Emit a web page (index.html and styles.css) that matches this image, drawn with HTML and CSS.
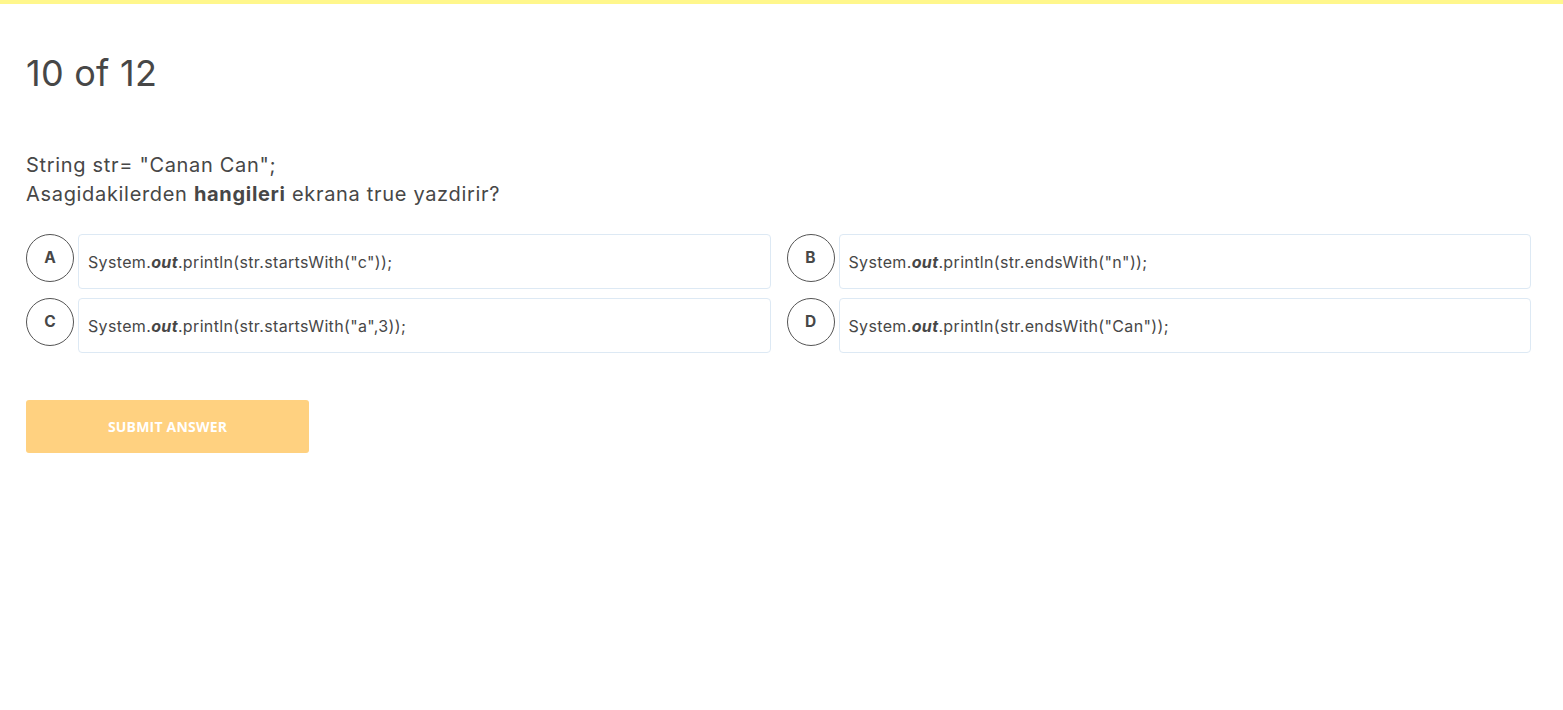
FILE: index.html
```html
<!DOCTYPE html>
<html>
<head>
<meta charset="utf-8">
<link rel="stylesheet" href="styles.css">
</head>
<body>
<div class="topbar"></div>
<main class="quiz">
  <h1 class="counter">10 of 12</h1>
  <div class="question">
    <p>String str= "Canan Can";</p>
    <p>Asagidakilerden <b>hangileri</b> ekrana true yazdirir?</p>
  </div>
  <div class="options">
    <div class="option"><span class="letter">A</span><div class="answer">System.<b><i>out</i></b>.println(str.startsWith("c"));</div></div>
    <div class="option"><span class="letter">B</span><div class="answer">System.<b><i>out</i></b>.println(str.endsWith("n"));</div></div>
    <div class="option"><span class="letter">C</span><div class="answer">System.<b><i>out</i></b>.println(str.startsWith("a",3));</div></div>
    <div class="option"><span class="letter">D</span><div class="answer">System.<b><i>out</i></b>.println(str.endsWith("Can"));</div></div>
  </div>
  <button class="submit">SUBMIT ANSWER</button>
</main>
</body>
</html>
```
FILE: styles.css
```css
html, body { margin: 0; padding: 0; background: #fff; }
body { font-family: Inter, "Noto Sans", sans-serif; color: #474747; }
.topbar { height: 4px; background: #fff78c; }
.quiz { padding: 0 32px 0 26px; }
.counter { margin: 0; padding-top: 47px; font-size: 36px; font-weight: 400; line-height: 44px; letter-spacing: 0.25px; color: #474747; }
.question { margin-top: 56px; font-size: 20px; line-height: 29px; letter-spacing: 0.68px; color: #474747; }
.question p { margin: 0; }
.question b { font-weight: 700; }
.options { margin-top: 25px; display: grid; grid-template-columns: 1fr 1fr; column-gap: 16px; row-gap: 9px; }
.option { display: flex; align-items: flex-start; gap: 4px; }
.letter { flex: none; width: 46px; height: 46px; border: 1px solid #555; border-radius: 50%; display: flex; align-items: center; justify-content: center; padding-bottom: 2px; box-sizing: content-box; height: 44px; font-size: 15.5px; font-weight: 700; color: #474747; }
.answer { flex: 1; height: 53px; border: 1px solid #dde9f4; border-radius: 4px; display: flex; align-items: center; padding: 0 9px; font-size: 16px; letter-spacing: 0.35px; color: #474747; }
.answer b { font-weight: 700; }
.submit { display: block; margin-top: 47px; width: 283px; height: 53px; border: 0; border-radius: 3px; background: #ffd180; color: #fff; font-family: "Open Sans", sans-serif; font-weight: 700; font-size: 14px; letter-spacing: 0.2px; }
```
